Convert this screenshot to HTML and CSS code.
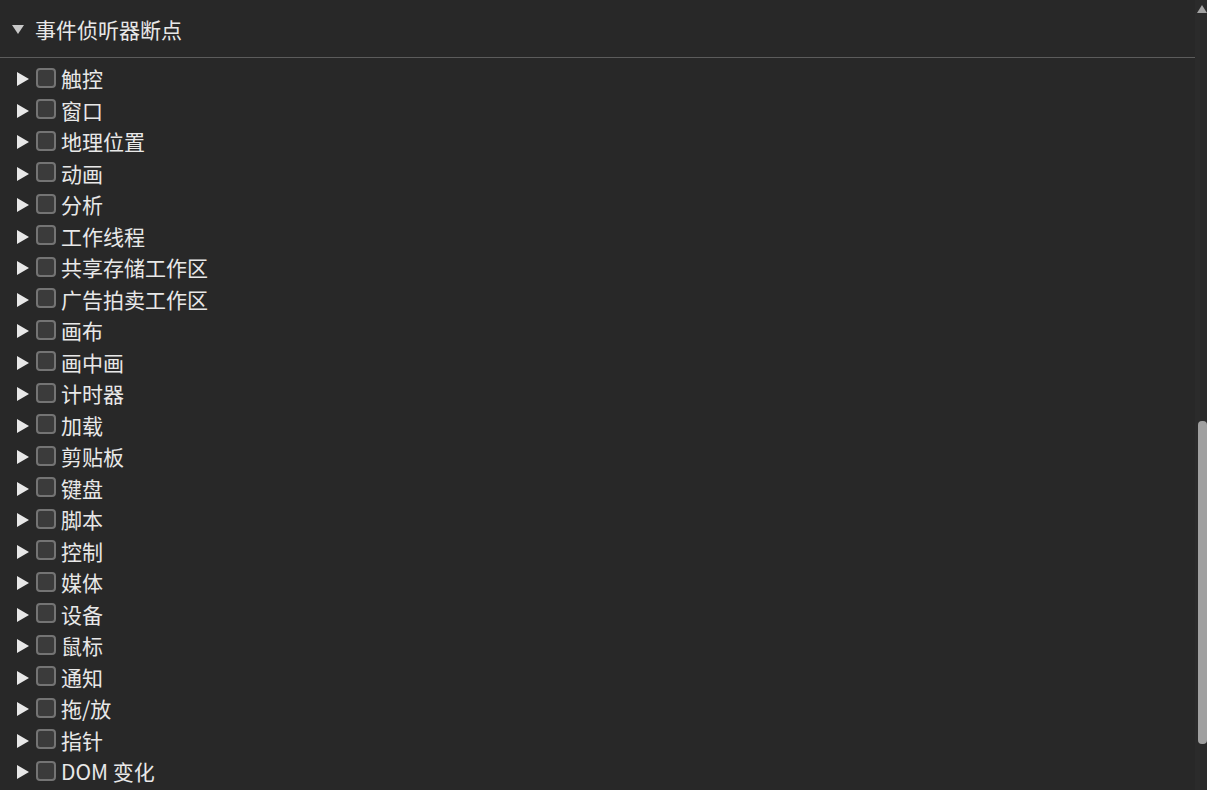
FILE: index.html
```html
<!DOCTYPE html>
<html lang="zh">
<head>
<meta charset="utf-8">
<link rel="stylesheet" href="styles.css">
</head>
<body>
<div class="page">
  <div class="main">
    <div class="header">
      <span class="caret-down"></span>
      <span class="title">事件侦听器断点</span>
    </div>
    <ul class="list">
      <li class="row"><span class="caret-right"></span><span class="box"></span><span class="label">触控</span></li>
      <li class="row"><span class="caret-right"></span><span class="box"></span><span class="label">窗口</span></li>
      <li class="row"><span class="caret-right"></span><span class="box"></span><span class="label">地理位置</span></li>
      <li class="row"><span class="caret-right"></span><span class="box"></span><span class="label">动画</span></li>
      <li class="row"><span class="caret-right"></span><span class="box"></span><span class="label">分析</span></li>
      <li class="row"><span class="caret-right"></span><span class="box"></span><span class="label">工作线程</span></li>
      <li class="row"><span class="caret-right"></span><span class="box"></span><span class="label">共享存储工作区</span></li>
      <li class="row"><span class="caret-right"></span><span class="box"></span><span class="label">广告拍卖工作区</span></li>
      <li class="row"><span class="caret-right"></span><span class="box"></span><span class="label">画布</span></li>
      <li class="row"><span class="caret-right"></span><span class="box"></span><span class="label">画中画</span></li>
      <li class="row"><span class="caret-right"></span><span class="box"></span><span class="label">计时器</span></li>
      <li class="row"><span class="caret-right"></span><span class="box"></span><span class="label">加载</span></li>
      <li class="row"><span class="caret-right"></span><span class="box"></span><span class="label">剪贴板</span></li>
      <li class="row"><span class="caret-right"></span><span class="box"></span><span class="label">键盘</span></li>
      <li class="row"><span class="caret-right"></span><span class="box"></span><span class="label">脚本</span></li>
      <li class="row"><span class="caret-right"></span><span class="box"></span><span class="label">控制</span></li>
      <li class="row"><span class="caret-right"></span><span class="box"></span><span class="label">媒体</span></li>
      <li class="row"><span class="caret-right"></span><span class="box"></span><span class="label">设备</span></li>
      <li class="row"><span class="caret-right"></span><span class="box"></span><span class="label">鼠标</span></li>
      <li class="row"><span class="caret-right"></span><span class="box"></span><span class="label">通知</span></li>
      <li class="row"><span class="caret-right"></span><span class="box"></span><span class="label">拖/放</span></li>
      <li class="row"><span class="caret-right"></span><span class="box"></span><span class="label">指针</span></li>
      <li class="row"><span class="caret-right"></span><span class="box"></span><span class="label">DOM 变化</span></li>
    </ul>
  </div>
  <div class="scrollbar">
    <span class="arrow-up"></span>
    <span class="thumb"></span>
  </div>
</div>
</body>
</html>
```

FILE: styles.css
```css
html, body {
  margin: 0;
  padding: 0;
  height: 100%;
  overflow: hidden;
  background: #282828;
}
body {
  font-family: "Noto Sans CJK SC", "Noto Sans", sans-serif;
  color: #e8e8e8;
}
.page {
  display: flex;
  height: 790px;
}
.main {
  flex: 1;
  min-width: 0;
}
.header {
  height: 58px;
  box-sizing: border-box;
  border-bottom: 1px solid #5c5c5c;
  display: flex;
  align-items: center;
  padding-left: 12px;
  padding-top: 7px;
}
.caret-down {
  width: 0;
  height: 0;
  border-left: 6px solid transparent;
  border-right: 6px solid transparent;
  border-top: 9px solid #c8c8c8;
  margin-right: 11px;
  margin-top: -6px;
}
.title {
  font-size: 21px;
  line-height: 24px;
  margin-top: -6px;
}
.list {
  list-style: none;
  margin: 0;
  padding: 5px 0 0 0;
}
.row {
  height: 31.5px;
  display: flex;
  align-items: center;
  padding-left: 17px;
}
.caret-right {
  width: 0;
  height: 0;
  border-top: 7px solid transparent;
  border-bottom: 7px solid transparent;
  border-left: 12px solid #e8e8e8;
  margin-right: 7px;
  margin-top: 1px;
}
.box {
  width: 16px;
  height: 16px;
  border: 2px solid #747474;
  border-radius: 4px;
  background: #3b3b3b;
  margin-right: 5px;
  margin-top: -2px;
}
.label {
  font-size: 21px;
  line-height: 24px;
  margin-top: -1px;
}
.scrollbar {
  width: 12px;
  background: #2b2b2b;
  display: flex;
  flex-direction: column;
  align-items: center;
}
.arrow-up {
  width: 0;
  height: 0;
  border-left: 5px solid transparent;
  border-right: 5px solid transparent;
  border-bottom: 8px solid #a3a3a3;
  margin-top: 5px;
  margin-left: 2px;
}
.thumb {
  width: 9px;
  height: 323px;
  background: #a0a0a0;
  border-radius: 4px;
  margin-top: 408px;
  margin-left: 2px;
}
```
